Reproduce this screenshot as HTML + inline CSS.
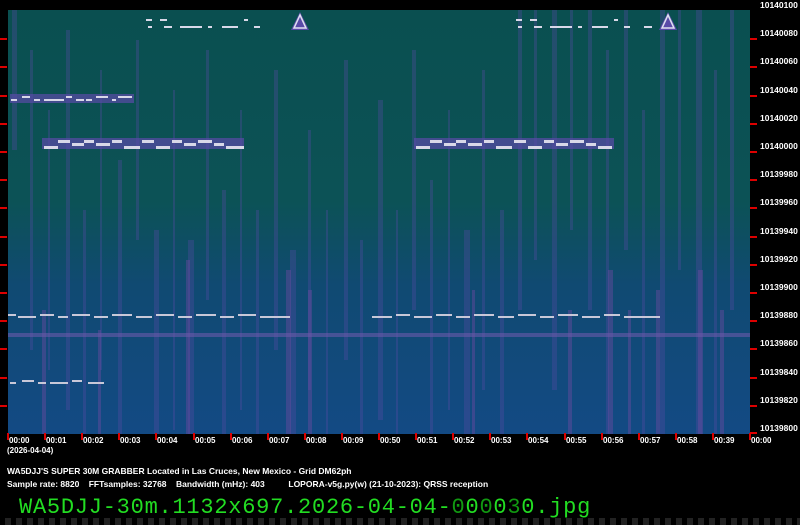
<!DOCTYPE html>
<html><head><meta charset="utf-8"><style>
html,body{margin:0;padding:0;background:#000;width:800px;height:525px;overflow:hidden;font-family:"Liberation Sans",sans-serif}
#spec{position:absolute;left:8px;top:10px;width:742px;height:424px;background:linear-gradient(#0a4f50 0%,#0c5256 45%,#104a72 65%,#134a84 100%)}
.yl{position:absolute;left:760px;font-size:8.5px;font-weight:bold;color:#fff;line-height:10px}
.tl{position:absolute;top:436px;font-size:8px;font-weight:bold;color:#fff;line-height:10px}
.tk{position:absolute;top:433px;width:2px;height:7px;background:#d00}
.rt{position:absolute;left:750px;width:7px;height:2px;background:#d00}
.lt{position:absolute;left:0;width:7px;height:2px;background:#d00}
.inf{position:absolute;left:7px;font-size:8.5px;font-weight:bold;color:#fff;white-space:pre}
#big{position:absolute;left:19px;top:495px;font-family:"Liberation Mono",monospace;font-size:22px;letter-spacing:0.75px;color:#22dd22;line-height:26px;white-space:pre}
#strip{position:absolute;left:0;top:518px;width:800px;height:7px;background:repeating-linear-gradient(90deg,#000 0 5px,#222 5px 11px)}
</style></head><body>
<div id="spec"><svg width="742" height="424" style="position:absolute;left:0;top:0">
<g fill="#5a4aa8" opacity="0.32">
<rect x="4" y="0" width="5" height="140"/><rect x="22" y="40" width="3" height="300"/><rect x="40" y="100" width="2" height="260"/>
<rect x="58" y="20" width="4" height="380"/><rect x="75" y="200" width="3" height="224"/><rect x="92" y="60" width="2" height="300"/>
<rect x="110" y="150" width="4" height="274"/><rect x="128" y="30" width="3" height="200"/><rect x="146" y="220" width="5" height="204"/>
<rect x="165" y="80" width="2" height="340"/><rect x="180" y="230" width="6" height="194"/><rect x="198" y="40" width="3" height="250"/>
<rect x="214" y="180" width="4" height="244"/><rect x="232" y="100" width="2" height="300"/><rect x="248" y="200" width="3" height="224"/>
<rect x="266" y="60" width="4" height="280"/><rect x="282" y="240" width="6" height="184"/><rect x="300" y="120" width="3" height="260"/>
<rect x="318" y="200" width="2" height="224"/><rect x="336" y="50" width="4" height="300"/><rect x="352" y="230" width="3" height="194"/>
<rect x="370" y="90" width="5" height="320"/><rect x="388" y="200" width="2" height="224"/><rect x="404" y="40" width="4" height="260"/>
<rect x="422" y="170" width="3" height="254"/><rect x="440" y="100" width="2" height="300"/><rect x="456" y="220" width="6" height="204"/>
<rect x="474" y="60" width="3" height="320"/><rect x="492" y="200" width="4" height="224"/><rect x="510" y="0" width="4" height="300"/>
<rect x="526" y="0" width="3" height="250"/><rect x="544" y="0" width="5" height="380"/><rect x="562" y="0" width="3" height="220"/>
<rect x="580" y="0" width="4" height="300"/><rect x="598" y="40" width="3" height="384"/><rect x="616" y="0" width="4" height="240"/>
<rect x="634" y="100" width="3" height="324"/><rect x="652" y="0" width="5" height="424"/><rect x="670" y="0" width="3" height="260"/>
<rect x="688" y="0" width="6" height="424"/><rect x="706" y="60" width="3" height="364"/><rect x="722" y="0" width="4" height="300"/>
</g>
<g fill="#6a4aa0" opacity="0.45">
<rect x="178" y="250" width="4" height="174"/><rect x="278" y="260" width="5" height="164"/><rect x="300" y="280" width="4" height="144"/>
<rect x="464" y="280" width="3" height="144"/><rect x="560" y="300" width="4" height="124"/><rect x="600" y="260" width="5" height="164"/>
<rect x="620" y="300" width="3" height="124"/><rect x="648" y="280" width="4" height="144"/><rect x="690" y="260" width="5" height="164"/>
<rect x="712" y="300" width="4" height="124"/><rect x="34" y="300" width="4" height="124"/><rect x="90" y="320" width="3" height="104"/>
</g>
<rect x="0" y="323" width="742" height="4" fill="#6a5aaa" opacity="0.6"/>
<g fill="#5a4aa8" opacity="0.7">
<rect x="2" y="84" width="124" height="9"/><rect x="34" y="128" width="202" height="11"/><rect x="406" y="128" width="200" height="11"/>
</g>
<g fill="#d8d8e8">
<rect x="3" y="89" width="6" height="2"/><rect x="14" y="86" width="8" height="2"/><rect x="26" y="89" width="6" height="2"/><rect x="36" y="89" width="20" height="2"/><rect x="58" y="86" width="6" height="2"/><rect x="68" y="89" width="8" height="2"/><rect x="78" y="89" width="6" height="2"/><rect x="88" y="86" width="12" height="2"/><rect x="104" y="89" width="4" height="2"/><rect x="110" y="86" width="14" height="2"/>
<rect x="36" y="136" width="14" height="3"/><rect x="50" y="130" width="12" height="3"/><rect x="64" y="133" width="12" height="3"/><rect x="76" y="130" width="10" height="3"/><rect x="88" y="133" width="14" height="3"/><rect x="104" y="130" width="10" height="3"/><rect x="116" y="136" width="16" height="3"/><rect x="134" y="130" width="12" height="3"/><rect x="148" y="136" width="14" height="3"/><rect x="164" y="130" width="10" height="3"/><rect x="176" y="133" width="12" height="3"/><rect x="190" y="130" width="14" height="3"/><rect x="206" y="133" width="10" height="3"/><rect x="218" y="136" width="18" height="3"/>
<rect x="408" y="136" width="14" height="3"/><rect x="422" y="130" width="12" height="3"/><rect x="436" y="133" width="12" height="3"/><rect x="448" y="130" width="10" height="3"/><rect x="460" y="133" width="14" height="3"/><rect x="476" y="130" width="10" height="3"/><rect x="488" y="136" width="16" height="3"/><rect x="506" y="130" width="12" height="3"/><rect x="520" y="136" width="14" height="3"/><rect x="536" y="130" width="10" height="3"/><rect x="548" y="133" width="12" height="3"/><rect x="562" y="130" width="14" height="3"/><rect x="578" y="133" width="10" height="3"/><rect x="590" y="136" width="14" height="3"/>
</g>
<g fill="#c8c8d8">
<rect x="0" y="304" width="8" height="2"/><rect x="10" y="306" width="18" height="2"/><rect x="32" y="304" width="14" height="2"/><rect x="50" y="306" width="10" height="2"/><rect x="64" y="304" width="18" height="2"/><rect x="86" y="306" width="14" height="2"/><rect x="104" y="304" width="20" height="2"/><rect x="128" y="306" width="16" height="2"/><rect x="148" y="304" width="18" height="2"/><rect x="170" y="306" width="14" height="2"/><rect x="188" y="304" width="20" height="2"/><rect x="212" y="306" width="14" height="2"/><rect x="230" y="304" width="18" height="2"/><rect x="252" y="306" width="30" height="2"/>
<rect x="364" y="306" width="20" height="2"/><rect x="388" y="304" width="14" height="2"/><rect x="406" y="306" width="18" height="2"/><rect x="428" y="304" width="16" height="2"/><rect x="448" y="306" width="14" height="2"/><rect x="466" y="304" width="20" height="2"/><rect x="490" y="306" width="16" height="2"/><rect x="510" y="304" width="18" height="2"/><rect x="532" y="306" width="14" height="2"/><rect x="550" y="304" width="20" height="2"/><rect x="574" y="306" width="18" height="2"/><rect x="596" y="304" width="16" height="2"/><rect x="616" y="306" width="36" height="2"/>
<rect x="2" y="372" width="6" height="2"/><rect x="14" y="370" width="12" height="2"/><rect x="30" y="372" width="8" height="2"/><rect x="42" y="372" width="18" height="2"/><rect x="64" y="370" width="10" height="2"/><rect x="80" y="372" width="16" height="2"/>
</g>
<g fill="#d8d8e8">
<rect x="138" y="9" width="6" height="2"/><rect x="140" y="16" width="4" height="2"/><rect x="152" y="9" width="7" height="2"/><rect x="156" y="16" width="8" height="2"/><rect x="172" y="16" width="22" height="2"/><rect x="200" y="16" width="4" height="2"/><rect x="214" y="16" width="16" height="2"/><rect x="236" y="9" width="4" height="2"/><rect x="246" y="16" width="6" height="2"/>
<rect x="508" y="9" width="6" height="2"/><rect x="510" y="16" width="4" height="2"/><rect x="522" y="9" width="7" height="2"/><rect x="526" y="16" width="8" height="2"/><rect x="542" y="16" width="22" height="2"/><rect x="570" y="16" width="4" height="2"/><rect x="584" y="16" width="16" height="2"/><rect x="606" y="9" width="4" height="2"/><rect x="616" y="16" width="6" height="2"/><rect x="636" y="16" width="8" height="2"/>
</g>
<polygon points="292,2 301,20 283,20" fill="#5a4aa8"/><polygon points="292,5 298,18 286,18" fill="none" stroke="#e0e0f0" stroke-width="1.5"/>
<polygon points="660,2 669,20 651,20" fill="#5a4aa8"/><polygon points="660,5 666,18 654,18" fill="none" stroke="#e0e0f0" stroke-width="1.5"/>
</svg></div>

<div class="yl" style="top:0px">10140100</div><div class="yl" style="top:28px">10140080</div><div class="yl" style="top:56px">10140060</div><div class="yl" style="top:85px">10140040</div>
<div class="yl" style="top:113px">10140020</div><div class="yl" style="top:141px">10140000</div><div class="yl" style="top:169px">10139980</div><div class="yl" style="top:197px">10139960</div>
<div class="yl" style="top:226px">10139940</div><div class="yl" style="top:254px">10139920</div><div class="yl" style="top:282px">10139900</div><div class="yl" style="top:310px">10139880</div>
<div class="yl" style="top:338px">10139860</div><div class="yl" style="top:367px">10139840</div><div class="yl" style="top:395px">10139820</div><div class="yl" style="top:423px">10139800</div>

<div class="rt" style="top:38px"></div><div class="rt" style="top:66px"></div><div class="rt" style="top:95px"></div><div class="rt" style="top:123px"></div><div class="rt" style="top:151px"></div><div class="rt" style="top:179px"></div><div class="rt" style="top:207px"></div><div class="rt" style="top:236px"></div><div class="rt" style="top:264px"></div><div class="rt" style="top:292px"></div><div class="rt" style="top:320px"></div><div class="rt" style="top:348px"></div><div class="rt" style="top:377px"></div><div class="rt" style="top:405px"></div><div class="rt" style="top:432px"></div>
<div class="lt" style="top:38px"></div><div class="lt" style="top:66px"></div><div class="lt" style="top:95px"></div><div class="lt" style="top:123px"></div><div class="lt" style="top:151px"></div><div class="lt" style="top:179px"></div><div class="lt" style="top:207px"></div><div class="lt" style="top:236px"></div><div class="lt" style="top:264px"></div><div class="lt" style="top:292px"></div><div class="lt" style="top:320px"></div><div class="lt" style="top:348px"></div><div class="lt" style="top:377px"></div><div class="lt" style="top:405px"></div>

<div class="tk" style="left:7px"></div><div class="tl" style="left:9px">00:00</div>
<div class="tk" style="left:44px"></div><div class="tl" style="left:46px">00:01</div>
<div class="tk" style="left:81px"></div><div class="tl" style="left:83px">00:02</div>
<div class="tk" style="left:118px"></div><div class="tl" style="left:120px">00:03</div>
<div class="tk" style="left:155px"></div><div class="tl" style="left:157px">00:04</div>
<div class="tk" style="left:193px"></div><div class="tl" style="left:195px">00:05</div>
<div class="tk" style="left:230px"></div><div class="tl" style="left:232px">00:06</div>
<div class="tk" style="left:267px"></div><div class="tl" style="left:269px">00:07</div>
<div class="tk" style="left:304px"></div><div class="tl" style="left:306px">00:08</div>
<div class="tk" style="left:341px"></div><div class="tl" style="left:343px">00:09</div>
<div class="tk" style="left:378px"></div><div class="tl" style="left:380px">00:50</div>
<div class="tk" style="left:415px"></div><div class="tl" style="left:417px">00:51</div>
<div class="tk" style="left:452px"></div><div class="tl" style="left:454px">00:52</div>
<div class="tk" style="left:489px"></div><div class="tl" style="left:491px">00:53</div>
<div class="tk" style="left:526px"></div><div class="tl" style="left:528px">00:54</div>
<div class="tk" style="left:564px"></div><div class="tl" style="left:566px">00:55</div>
<div class="tk" style="left:601px"></div><div class="tl" style="left:603px">00:56</div>
<div class="tk" style="left:638px"></div><div class="tl" style="left:640px">00:57</div>
<div class="tk" style="left:675px"></div><div class="tl" style="left:677px">00:58</div>
<div class="tk" style="left:712px"></div><div class="tl" style="left:714px">00:39</div>
<div class="tk" style="left:749px"></div><div class="tl" style="left:751px">00:00</div>

<div class="inf" style="top:466px">WA5DJJ'S SUPER 30M GRABBER Located in Las Cruces, New Mexico - Grid DM62ph</div>
<div class="inf" style="top:479px">Sample rate: 8820    FFTsamples: 32768    Bandwidth (mHz): 403          LOPORA-v5g.py(w) (21-10-2023): QRSS reception</div>
<div class="tl" style="left:7px;top:446px">(2026-04-04)</div>
<div id="big">WA5DJJ-30m.1132x697.2026-04-04-<span style="color:#119911">0</span>0<span style="color:#119911">0</span>0<span style="color:#119911">3</span>0.jpg</div>
<div id="strip"></div>
</body></html>
